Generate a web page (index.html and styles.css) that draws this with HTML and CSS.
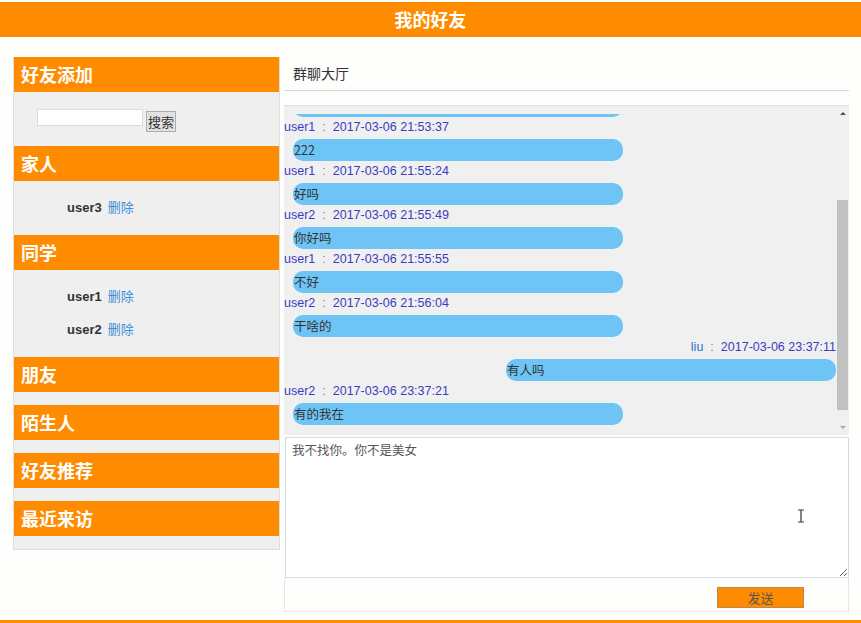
FILE: index.html
```html
<!DOCTYPE html>
<html lang="zh-CN">
<head>
    <meta charset="UTF-8" />
    <title>我的好友</title>
    <link rel="stylesheet" href="styles.css">
</head>
<body>
    <div class="topbar">我的好友</div>

    <div class="main">
        <div class="sidebar">
            <div class="group-title">好友添加</div>
            <div class="group-search">
                <input type="text" class="search-input">
                <button class="search-btn">搜索</button>
            </div>

            <div class="group-title">家人</div>
            <div class="group-list">
                <div class="friend"><b>user3</b><a href="#">删除</a></div>
            </div>

            <div class="group-title">同学</div>
            <div class="group-list">
                <div class="friend"><b>user1</b><a href="#">删除</a></div>
                <div class="friend"><b>user2</b><a href="#">删除</a></div>
            </div>

            <div class="group-title">朋友</div>
            <div class="group-empty"></div>
            <div class="group-title">陌生人</div>
            <div class="group-empty"></div>
            <div class="group-title">好友推荐</div>
            <div class="group-empty"></div>
            <div class="group-title">最近来访</div>
            <div class="group-empty"></div>
        </div>

        <div class="chat-panel">
            <div class="chat-title">群聊大厅</div>
            <div class="chat-box">
                <div class="chat-list">
                    <div class="msg">
                        <div class="bubble"></div>
                    </div>
                    <div class="msg">
                        <div class="meta"><span class="name">user1</span><span class="sep">:</span><span class="time">2017-03-06 21:53:37</span></div>
                        <div class="bubble">222</div>
                    </div>
                    <div class="msg">
                        <div class="meta"><span class="name">user1</span><span class="sep">:</span><span class="time">2017-03-06 21:55:24</span></div>
                        <div class="bubble">好吗</div>
                    </div>
                    <div class="msg">
                        <div class="meta"><span class="name">user2</span><span class="sep">:</span><span class="time">2017-03-06 21:55:49</span></div>
                        <div class="bubble">你好吗</div>
                    </div>
                    <div class="msg">
                        <div class="meta"><span class="name">user1</span><span class="sep">:</span><span class="time">2017-03-06 21:55:55</span></div>
                        <div class="bubble">不好</div>
                    </div>
                    <div class="msg">
                        <div class="meta"><span class="name">user2</span><span class="sep">:</span><span class="time">2017-03-06 21:56:04</span></div>
                        <div class="bubble">干啥的</div>
                    </div>
                    <div class="msg mine">
                        <div class="meta"><span class="name">liu</span><span class="sep">:</span><span class="time">2017-03-06 23:37:11</span></div>
                        <div class="bubble">有人吗</div>
                    </div>
                    <div class="msg">
                        <div class="meta"><span class="name">user2</span><span class="sep">:</span><span class="time">2017-03-06 23:37:21</span></div>
                        <div class="bubble">有的我在</div>
                    </div>
                </div>
                <div class="scrollbar">
                    <div class="sb-btn"><span class="arrow-up"></span></div>
                    <div class="sb-track"><div class="sb-thumb"></div></div>
                    <div class="sb-btn"><span class="arrow-down"></span></div>
                </div>
            </div>
            <div class="compose">
                <textarea class="compose-input">我不找你。你不是美女</textarea>
                <svg class="ibeam" width="8" height="14" viewBox="0 0 8 14">
                    <path d="M1 1h6M4 1v12M1 13h6" stroke="#333" stroke-width="1.2" fill="none"/>
                </svg>
            </div>
            <div class="send-row">
                <button class="send-btn">发送</button>
            </div>
        </div>
    </div>

    <div class="footer"></div>
</body>
</html>
```

FILE: styles.css
```css
body {
    margin: 0;
    padding: 2px 0 0;
    background: #fefefd;
    color: #333;
    font-family: "Liberation Sans", "Noto Sans CJK SC", Arial, sans-serif;
    font-size: 13px;
    overflow: hidden;
}

.topbar {
    height: 35px;
    line-height: 35px;
    background: #ff8c00;
    color: #fff;
    text-align: center;
    font-family: "Noto Sans CJK SC", sans-serif;
    font-size: 18px;
    font-weight: bold;
}

.main {
    display: flex;
    align-items: flex-start;
    gap: 5px;
    padding: 20px 0 0 13px;
}

/* left column */
.sidebar {
    width: 265px;
    background: #efefef;
    border: 1px solid #dcdcdc;
    border-top: none;
    margin-right: -1px;
}

.group-title {
    height: 35px;
    line-height: 34px;
    padding-left: 7px;
    background: #ff8c00;
    color: #fff;
    font-family: "Noto Sans CJK SC", sans-serif;
    font-size: 18px;
    font-weight: bold;
}

.group-search {
    height: 54px;
    display: flex;
    align-items: center;
    padding-left: 23px;
    padding-top: 1px;
    box-sizing: border-box;
}

.search-input {
    width: 106px;
    height: 17px;
    box-sizing: border-box;
    border: 1px solid #dcdcdc;
    background: #fff;
    padding: 0 2px;
    margin: -4px 3px 0 0;
}

.search-btn {
    height: 21px;
    padding: 0 1px;
    margin-top: 4px;
    border: 1px solid #adadad;
    background: #e1e1e1;
    color: #333;
    font-family: "Noto Sans CJK SC", sans-serif;
    font-size: 13px;
    line-height: 19px;
}

.group-list {
    padding: 10px 0 11px 53px;
}

.friend {
    height: 33px;
    line-height: 33px;
    overflow: hidden;
}

.friend b {
    color: #333;
    font-size: 13px;
}

.friend a {
    margin-left: 6px;
    color: #3b8ed8;
    text-decoration: none;
    font-family: "Noto Sans CJK SC", sans-serif;
    font-size: 13px;
    line-height: 1;
}

.group-empty {
    height: 13px;
}

/* chat column */
.chat-panel {
    width: 565px;
}

.chat-title {
    height: 33px;
    line-height: 33px;
    padding-left: 9px;
    border-bottom: 1px solid #d4d4d4;
    font-family: "Noto Sans CJK SC", sans-serif;
    font-size: 14px;
    color: #333;
}

.chat-box {
    display: flex;
    margin-top: 14px;
    height: 330px;
    box-sizing: border-box;
    background: #f0f0f0;
    border-top: 1px solid #e2e2e2;
}

.chat-list {
    flex: 1;
    min-width: 0;
    margin-top: 8px;
    overflow: hidden;
    display: flex;
    flex-direction: column;
    justify-content: flex-end;
    padding-bottom: 10px;
}

.meta {
    height: 22px;
    line-height: 20px;
    white-space: nowrap;
    font-size: 12.5px;
}

.meta .name,
.meta .time {
    color: #3c3cc0;
}

.meta .sep {
    color: #888;
    margin: 0 7px;
}

.bubble {
    width: 330px;
    height: 22px;
    line-height: 22px;
    margin-left: 9px;
    padding-left: 1px;
    box-sizing: border-box;
    background: #6ec4f4;
    border-radius: 10px;
    color: #333;
    font-family: "Noto Sans CJK SC", sans-serif;
    font-size: 12.5px;
    overflow: hidden;
}

.msg.mine .meta {
    text-align: right;
}

.msg.mine .meta .name {
    color: #2a6fc6;
}

.msg.mine .bubble {
    margin-left: auto;
}

/* drawn scrollbar, the chat sits scrolled to its end */
.scrollbar {
    width: 13px;
    flex-shrink: 0;
    display: flex;
    flex-direction: column;
}

.sb-btn {
    height: 15px;
    display: flex;
    align-items: center;
    justify-content: center;
}

.arrow-up {
    border-left: 3px solid transparent;
    border-right: 3px solid transparent;
    border-bottom: 3px solid #505050;
}

.arrow-down {
    border-left: 3px solid transparent;
    border-right: 3px solid transparent;
    border-top: 3px solid #a8a8a8;
}

.sb-track {
    flex: 1;
    padding-top: 79px;
}

.sb-thumb {
    height: 210px;
    margin: 0 1px;
    background: #c1c1c1;
}

.compose {
    position: relative;
    margin-top: 2px;
}

.compose-input {
    display: block;
    width: 564px;
    height: 141px;
    box-sizing: border-box;
    margin: 0 0 0 1px;
    padding: 2px 6px;
    border: 1px solid #cfdde6;
    background: #fff;
    color: #555;
    font-family: "Noto Sans CJK SC", sans-serif;
    font-size: 12.5px;
    resize: both;
}

.ibeam {
    position: absolute;
    left: 513px;
    top: 72px;
}

.send-row {
    height: 34px;
    box-sizing: border-box;
    padding: 9px 44px 0 0;
    display: flex;
    justify-content: flex-end;
    align-items: flex-start;
    border: 1px solid #e6e6e6;
    border-top: none;
}

.send-btn {
    width: 87px;
    height: 21px;
    padding: 0;
    border: 1px solid #b98a4f;
    background: #ff8c00;
    color: #555;
    font-family: "Noto Sans CJK SC", sans-serif;
    font-size: 13px;
    line-height: 19px;
}

.footer {
    margin-top: 8px;
    height: 10px;
    background: #ff8c00;
}
```
